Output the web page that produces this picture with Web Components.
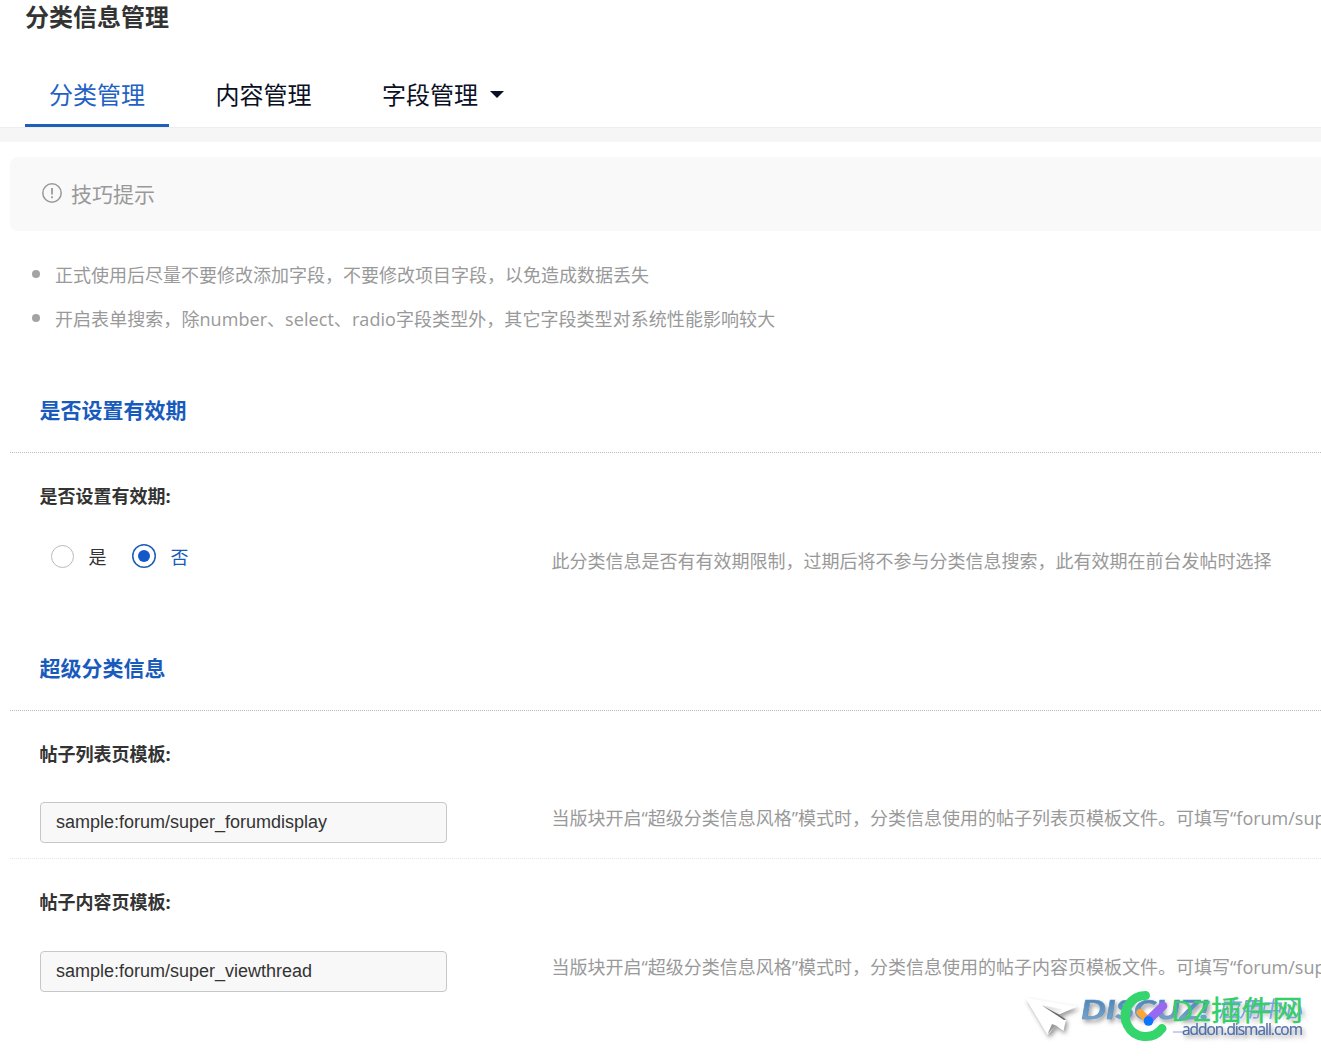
<!DOCTYPE html>
<html lang="zh-CN">
<head>
<meta charset="utf-8">
<title>分类信息管理</title>
<style>
    html, body {
        margin: 0;
        overflow: hidden;
    }

    body {
        background: #fff;
        color: #333;
        font-family: "Open Sans", "Noto Sans CJK SC", sans-serif;
        font-size: 18px;
        --blue: #195bbd;
        --grey: #999;
    }
</style>
</head>
<body>
<admin-page>
    <admin-header slot="header" title_text="分类信息管理">
        <admin-tab active>分类管理</admin-tab>
        <admin-tab>内容管理</admin-tab>
        <admin-tab menu>字段管理</admin-tab>
    </admin-header>

    <tip-box tip_title="技巧提示">
        <tip-item>正式使用后尽量不要修改添加字段，不要修改项目字段，以免造成数据丢失</tip-item>
        <tip-item class="latin">开启表单搜索，除number、select、radio字段类型外，其它字段类型对系统性能影响较大</tip-item>
    </tip-box>

    <form-section section_title="是否设置有效期">
        <form-row class="radios" label="是否设置有效期:">
            <radio-item>是</radio-item>
            <radio-item checked>否</radio-item>
            <span slot="desc">此分类信息是否有有效期限制，过期后将不参与分类信息搜索，此有效期在前台发帖时选择</span>
        </form-row>
    </form-section>

    <form-section section_title="超级分类信息">
        <form-row label="帖子列表页模板:" line>
            <text-field value="sample:forum/super_forumdisplay"></text-field>
            <span slot="desc">当版块开启“超级分类信息风格”模式时，分类信息使用的帖子列表页模板文件。可填写“forum/sup</span>
        </form-row>
        <form-row label="帖子内容页模板:">
            <text-field value="sample:forum/super_viewthread"></text-field>
            <span slot="desc">当版块开启“超级分类信息风格”模式时，分类信息使用的帖子内容页模板文件。可填写“forum/sup</span>
        </form-row>
    </form-section>

    <water-mark slot="mark"></water-mark>
</admin-page>

<script>
// makes a custom element from a template string
function makeElement(name, html, setup) {
    const template = document.createElement("template");
    template.innerHTML = html;

    customElements.define(name, class extends HTMLElement {
        constructor() {
            super();
            this.attachShadow({ mode: "open" });
        }

        connectedCallback() {
            if (this.shadowRoot.childNodes.length) return;
            this.shadowRoot.appendChild(template.content.cloneNode(true));
            if (setup) setup(this, this.shadowRoot);
        }
    });
}

makeElement("admin-page", `
<style>
    :host {
        display: block;
        position: relative;
        height: 1056px;
        overflow: hidden;
    }

    main {
        padding: 15px 0 0 10px;
    }
</style>
<slot name="header"></slot>
<main><slot></slot></main>
<slot name="mark"></slot>
`);

makeElement("admin-header", `
<style>
    :host {
        display: block;
        border-bottom: 14px solid #f6f6f6;
    }

    h1 {
        margin: 0 0 31px;
        padding-left: 25px;
        font-size: 24px;
        line-height: 33px;
    }

    nav {
        display: flex;
        gap: 22.5px;
        height: 63px;
        padding-left: 25px;
        border-bottom: 1px solid #eee;
    }
</style>
<h1></h1>
<nav><slot></slot></nav>
`, (el, root) => {
    root.querySelector("h1").textContent = el.getAttribute("title_text");
});

makeElement("admin-tab", `
<style>
    :host {
        display: flex;
        align-items: center;
        gap: 12px;
        box-sizing: border-box;
        height: 63px;
        padding: 1px 24px 0;
        border-bottom: 3px solid transparent;
        color: #0b1026;
        font-size: 24px;
        line-height: 60px;
        cursor: pointer;
    }

    :host([active]) {
        color: #2361c4;
        border-color: #1f5fb8;
    }

    svg {
        display: none;
    }

    :host([menu]) svg {
        display: block;
    }
</style>
<slot></slot>
<svg width="14" height="7" viewBox="0 0 14 7"><path d="M0 0h14L7 7z" fill="currentColor"/></svg>
`);

makeElement("tip-box", `
<style>
    :host {
        display: block;
        color: var(--grey);
    }

    .head {
        display: flex;
        align-items: center;
        gap: 9px;
        height: 74px;
        padding-left: 32px;
        background: #f9f9f9;
        border-radius: 8px 0 0 8px;
        font-size: 21px;
    }

    .head span {
        margin-top: -2px;
    }

    svg {
        margin-top: -2px;
    }

    ul {
        margin: 22px 0 0;
        padding: 0;
    }
</style>
<div class="head">
    <svg width="20" height="20" viewBox="0 0 20 20" fill="none" stroke="currentColor" stroke-width="1.5">
        <circle cx="10" cy="10" r="9.2"/>
        <path d="M10 5v6.600M10 13.200v2" stroke-width="1.800"/>
    </svg>
    <span></span>
</div>
<ul><slot></slot></ul>
`, (el, root) => {
    root.querySelector("span").textContent = el.getAttribute("tip_title");
});

makeElement("tip-item", `
<style>
    :host {
        display: flex;
        align-items: center;
        gap: 15px;
        height: 44px;
        padding-left: 22px;
        white-space: nowrap;
    }

    :host(.latin) {
        letter-spacing: .06px;
    }

    i {
        width: 8px;
        height: 8px;
        margin-top: -2px;
        border-radius: 50%;
        background: #a3a3a3;
    }

    span {
        margin-top: -3px;
    }
</style>
<i></i><span><slot></slot></span>
`);

makeElement("form-section", `
<style>
    :host {
        display: block;
    }

    h2 {
        margin: 0;
        padding: 28px 0 1px 29.5px;
        height: 82px;
        box-sizing: content-box;
        border-bottom: 1px dotted #bbb;
        color: var(--blue);
        font-size: 21px;
        line-height: 82px;
    }
</style>
<h2></h2>
<slot></slot>
`, (el, root) => {
    root.querySelector("h2").textContent = el.getAttribute("section_title");
});

makeElement("form-row", `
<style>
    :host {
        display: block;
        height: 148px;
    }

    :host([line]) {
        border-bottom: 1px dotted #e6e6e6;
        height: 147px;
    }

    :host(.radios) {
        height: 146px;
    }

    h3 {
        margin: 0;
        padding: 22px 0 0 29.5px;
        font-size: 18px;
        line-height: 42px;
    }

    .row {
        display: flex;
        align-items: center;
        height: 41px;
        padding: 28px 0 0 30px;
    }

    :host([line]) .row {
        padding-top: 27px;
    }

    :host(.radios) .row {
        padding-top: 20px;
    }

    .control {
        display: flex;
        flex: 0 0 511.5px;
    }

    .desc {
        color: var(--grey);
        white-space: nowrap;
        margin-top: -12px;
    }

    :host(.radios) .desc {
        margin-top: 4px;
    }
</style>
<h3></h3>
<div class="row">
    <div class="control"><slot></slot></div>
    <div class="desc"><slot name="desc"></slot></div>
</div>
`, (el, root) => {
    root.querySelector("h3").textContent = el.getAttribute("label");
});

makeElement("radio-item", `
<style>
    :host {
        display: flex;
        align-items: center;
        gap: 15px;
        margin: -3px 15px 0 10px;
    }

    :host([checked]) {
        margin-left: 0;
        color: var(--blue);
    }

    i {
        display: flex;
        align-items: center;
        justify-content: center;
        box-sizing: border-box;
        width: 23px;
        height: 23px;
        margin: 0 0 -1px .5px;
        border: 1px solid #bbb;
        border-radius: 50%;
    }

    :host([checked]) i {
        width: 24px;
        height: 24px;
        margin: -1px 0 0 10px;
        border: 0;
        box-shadow: inset 0 0 0 1.5px #1c5cb9;
    }

    :host([checked]) i::after {
        content: "";
        width: 12px;
        height: 12px;
        border-radius: 50%;
        background: #1459c8;
    }
</style>
<i></i><slot></slot>
`);

makeElement("text-field", `
<style>
    :host {
        display: flex;
        align-items: center;
        box-sizing: border-box;
        width: 407px;
        height: 41px;
        padding: 0 15px 1px;
        border: 1px solid #c5c7c8;
        border-radius: 4px;
        background: #f8f8f8;
        color: #333;
        font-family: "Liberation Sans", sans-serif;
    }
</style>
<span></span>
`, (el, root) => {
    root.querySelector("span").textContent = el.getAttribute("value");
});

// two overlapping logos in the bottom right corner
makeElement("water-mark", `
<style>
    :host {
        position: absolute;
        right: 0;
        bottom: 0;
        width: 311px;
        height: 76px;
        pointer-events: none;
    }

    svg {
        display: block;
    }

    .shade {
        filter: drop-shadow(2px 3px 2px rgba(60, 60, 60, .5));
    }
</style>
<svg width="311" height="76" viewBox="0 0 311 76">
    <defs>
        <linearGradient id="steel" x1="0" y1="0" x2="0" y2="1">
            <stop offset="0" stop-color="#3f78b0"/>
            <stop offset="1" stop-color="#80acd1"/>
        </linearGradient>
        <linearGradient id="fold" x1="0" y1="0" x2="1" y2="0">
            <stop offset="0" stop-color="#555"/>
            <stop offset="1" stop-color="#ddd"/>
        </linearGradient>
    </defs>
    <g class="shade">
        <path d="M15 17.500L67.500 26.500 49 34.500 56 39.500 53.500 51 46 45.500 37.500 55z" fill="#fff"/>
    </g>
    <path d="M32 25.500L52 29 49 34.500z" fill="url(#fold)" opacity=".25"/>
    <path d="M32 25.500L49 34.500 56 39.500 54 40z" fill="#666"/>
    <path d="M37.500 54l4.500-10 4 1.500z" fill="#999"/>
    <g class="shade">
        <text x="71" y="38.500" font-family="Lato, sans-serif" font-size="27" font-weight="700" font-style="italic" fill="url(#steel)" stroke="#5f94c3" stroke-width=".6" textLength="128" lengthAdjust="spacingAndGlyphs">DISCUZ!</text>
        <text x="208" y="37" font-family="Noto Sans CJK SC, sans-serif" font-size="22" fill="#7aa3e8" transform="translate(7 0) skewX(-10)" textLength="84">应用中心</text>
        <text x="172" y="55" font-family="Open Sans, sans-serif" font-size="15.500" fill="#4d6fab" stroke="#4d6fab" stroke-width=".2" textLength="121">addon.dismall.com</text>
    </g>
    <path d="M163 52h10" stroke="#9a9ade" stroke-width="1"/>
    <path d="M135.500 15.500A20.500 20.500 0 1 0 152 48.500" fill="none" stroke="#34d56c" stroke-width="9" stroke-linecap="round"/>
    <g stroke-linecap="round">
        <path d="M130 32.500l8 7.500" stroke="#faa638" stroke-width="7"/>
        <path d="M153 26l-14 13.500" stroke="#9769f1" stroke-width="8.500"/>
    </g>
    <circle cx="138.500" cy="41" r="4.800" fill="#0b75ff"/>
    <text x="161" y="40.500" font-family="Open Sans, Noto Sans CJK SC, sans-serif" font-size="28" fill="#35ce68" stroke="#35ce68" stroke-width=".3" textLength="132" lengthAdjust="spacingAndGlyphs">DZ插件网</text>
</svg>
`);
</script>
</body>
</html>
